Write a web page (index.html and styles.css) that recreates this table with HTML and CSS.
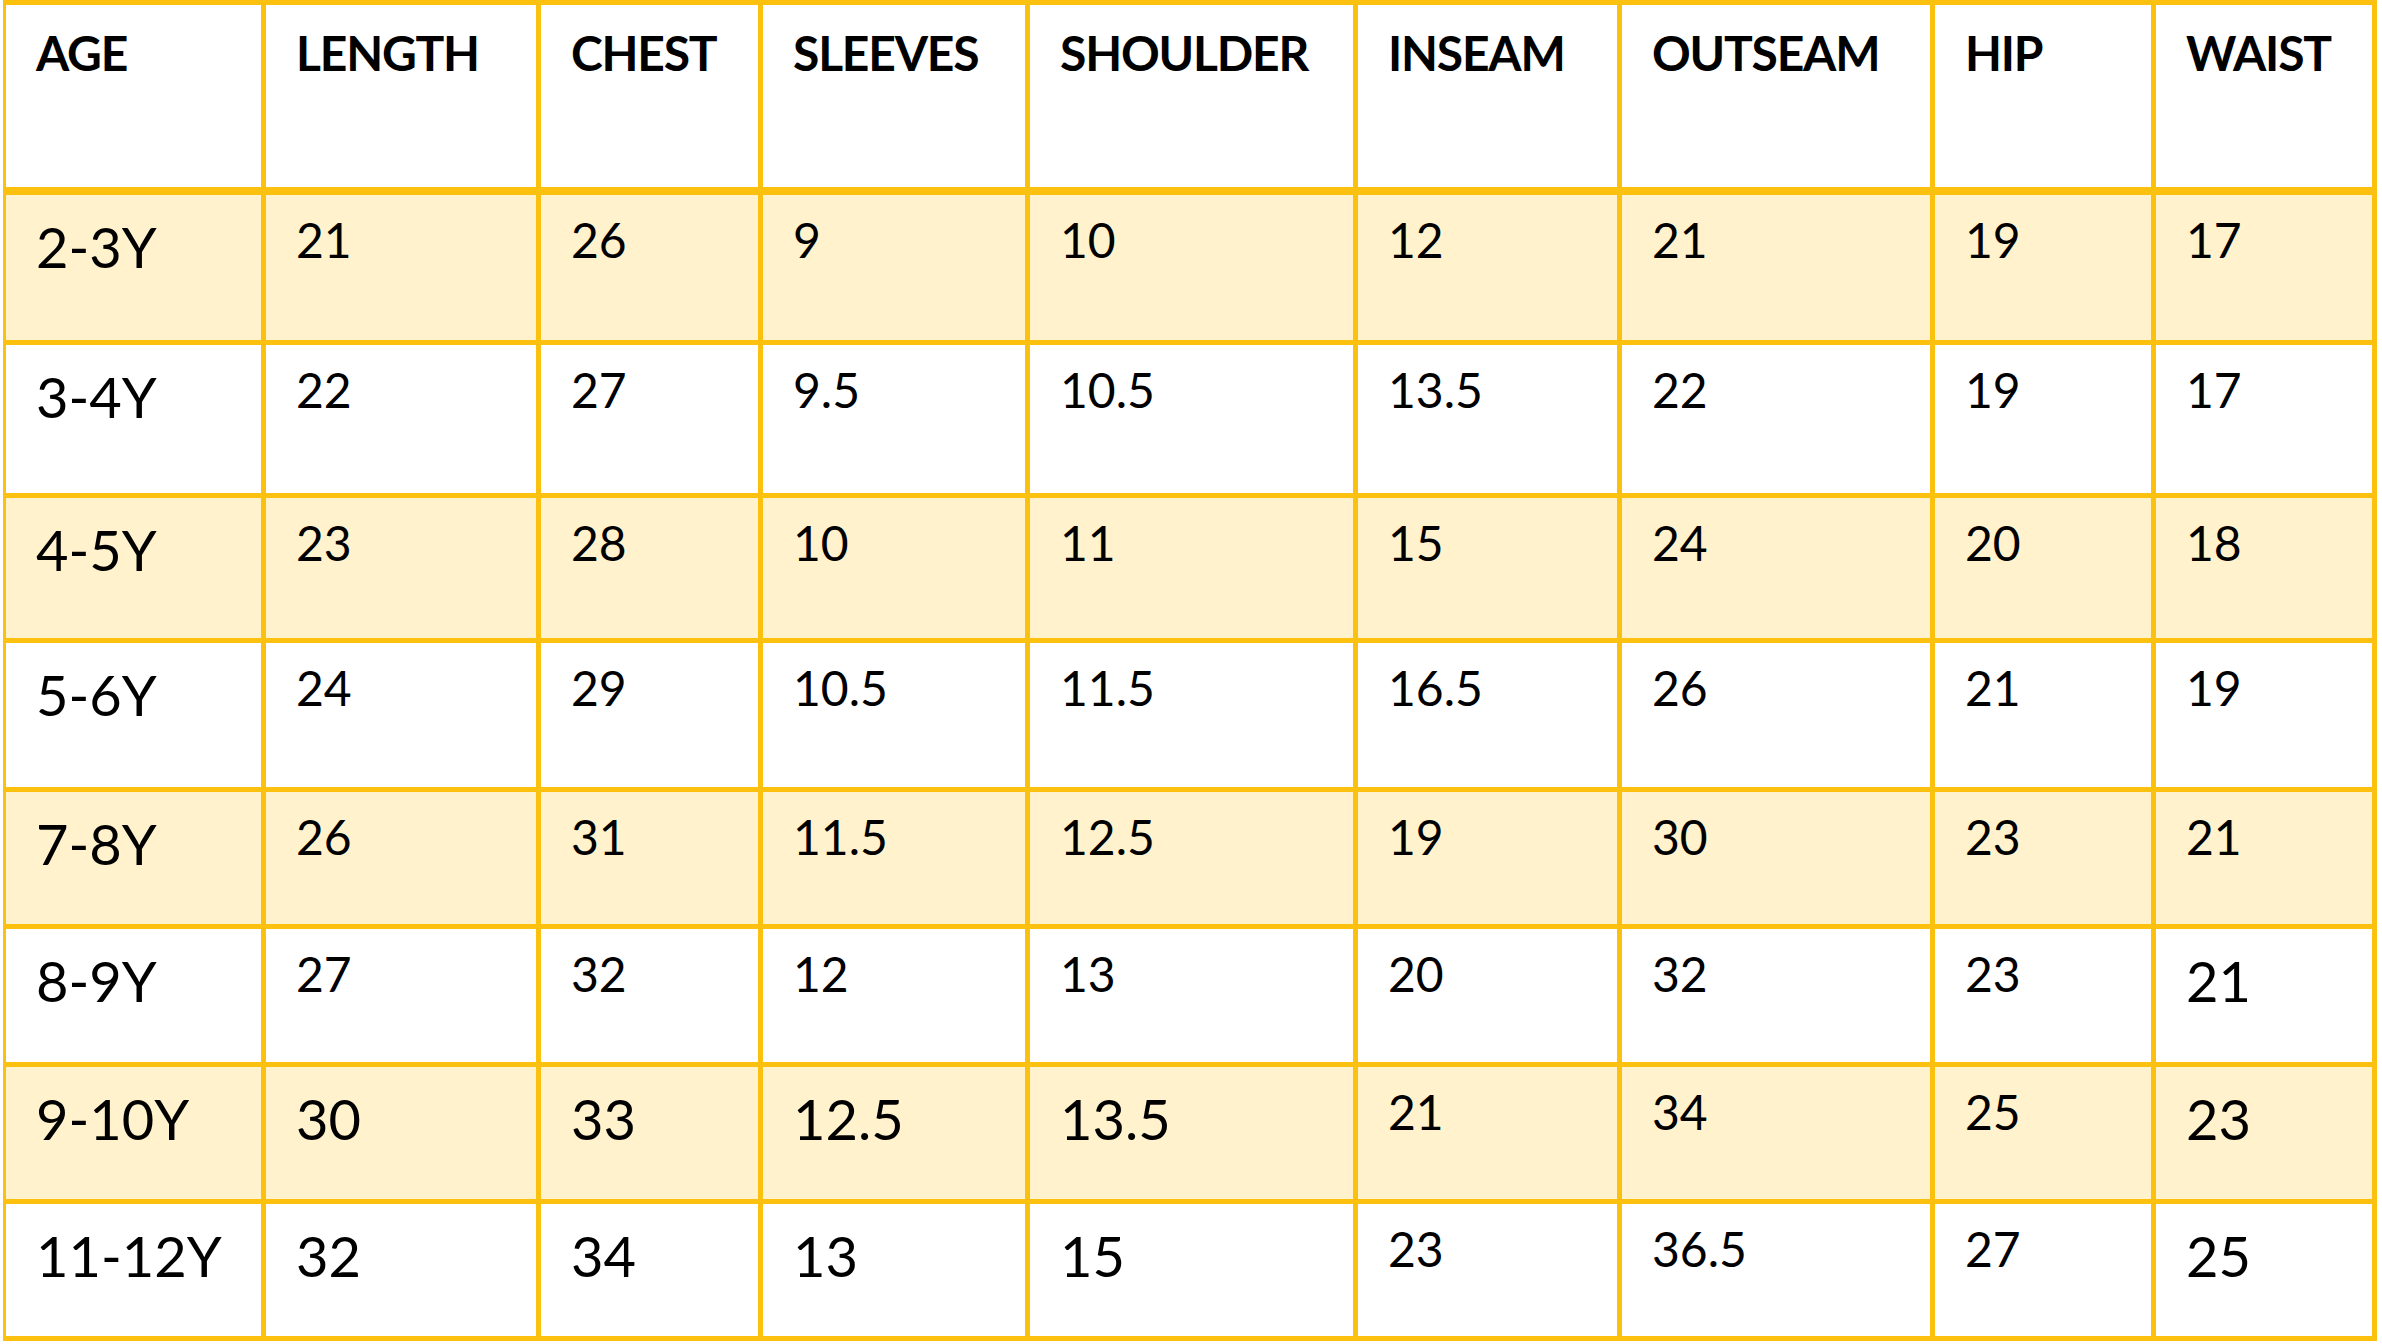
FILE: index.html
```html
<!DOCTYPE html>
<html lang="en">
<head>
<meta charset="utf-8">
<title>Size Chart</title>
<link rel="stylesheet" href="styles.css">
</head>
<body>
<div class="sheet" role="table">
  <div class="row head" role="row">
    <div class="cell" role="columnheader">AGE</div>
    <div class="cell" role="columnheader">LENGTH</div>
    <div class="cell" role="columnheader">CHEST</div>
    <div class="cell" role="columnheader">SLEEVES</div>
    <div class="cell" role="columnheader">SHOULDER</div>
    <div class="cell" role="columnheader">INSEAM</div>
    <div class="cell" role="columnheader">OUTSEAM</div>
    <div class="cell" role="columnheader">HIP</div>
    <div class="cell" role="columnheader">WAIST</div>
  </div>
  <div class="row shaded" role="row">
    <div class="cell big">2-3Y</div><div class="cell">21</div><div class="cell">26</div><div class="cell">9</div><div class="cell">10</div><div class="cell">12</div><div class="cell">21</div><div class="cell">19</div><div class="cell">17</div>
  </div>
  <div class="row" role="row">
    <div class="cell big">3-4Y</div><div class="cell">22</div><div class="cell">27</div><div class="cell">9.5</div><div class="cell">10.5</div><div class="cell">13.5</div><div class="cell">22</div><div class="cell">19</div><div class="cell">17</div>
  </div>
  <div class="row shaded" role="row">
    <div class="cell big">4-5Y</div><div class="cell">23</div><div class="cell">28</div><div class="cell">10</div><div class="cell">11</div><div class="cell">15</div><div class="cell">24</div><div class="cell">20</div><div class="cell">18</div>
  </div>
  <div class="row" role="row">
    <div class="cell big">5-6Y</div><div class="cell">24</div><div class="cell">29</div><div class="cell">10.5</div><div class="cell">11.5</div><div class="cell">16.5</div><div class="cell">26</div><div class="cell">21</div><div class="cell">19</div>
  </div>
  <div class="row shaded" role="row">
    <div class="cell big">7-8Y</div><div class="cell">26</div><div class="cell">31</div><div class="cell">11.5</div><div class="cell">12.5</div><div class="cell">19</div><div class="cell">30</div><div class="cell">23</div><div class="cell">21</div>
  </div>
  <div class="row" role="row">
    <div class="cell big">8-9Y</div><div class="cell">27</div><div class="cell">32</div><div class="cell">12</div><div class="cell">13</div><div class="cell">20</div><div class="cell">32</div><div class="cell">23</div><div class="cell big">21</div>
  </div>
  <div class="row shaded" role="row">
    <div class="cell big">9-10Y</div><div class="cell big">30</div><div class="cell big">33</div><div class="cell big">12.5</div><div class="cell big">13.5</div><div class="cell">21</div><div class="cell">34</div><div class="cell">25</div><div class="cell big">23</div>
  </div>
  <div class="row" role="row">
    <div class="cell big">11-12Y</div><div class="cell big">32</div><div class="cell big">34</div><div class="cell big">13</div><div class="cell big">15</div><div class="cell">23</div><div class="cell">36.5</div><div class="cell">27</div><div class="cell big">25</div>
  </div>
</div>
</body>
</html>
```

FILE: styles.css
```css
html, body {
  margin: 0;
  padding: 0;
  background: #ffffff;
}

body {
  font-family: Lato, "Open Sans", "Liberation Sans", sans-serif;
  color: #000000;
}

.sheet {
  display: grid;
  grid-template-columns: 255px 270px 217px 262px 323px 259px 308px 216px 216px;
  grid-template-rows: 185px 145px 148px 140px 144px 132px 133px 132px 132px;
  gap: 5px;
  padding: 5px 5px 5px 3px;
  margin-left: 3px;
  width: max-content;
  background: #fcc10f;
}

.row {
  display: contents;
}

.cell {
  background: #ffffff;
  padding: 16px 0 0 30px;
  font-size: 48px;
  line-height: 1.2;
  white-space: nowrap;
}

.shaded .cell {
  background: #fff2cc;
}

.cell.big {
  font-size: 56px;
  padding-top: 18px;
}

.head .cell {
  margin-bottom: 3px;
  font-weight: 700;
  font-size: 48px;
  letter-spacing: -1.2px;
  padding-top: 19px;
}
```
